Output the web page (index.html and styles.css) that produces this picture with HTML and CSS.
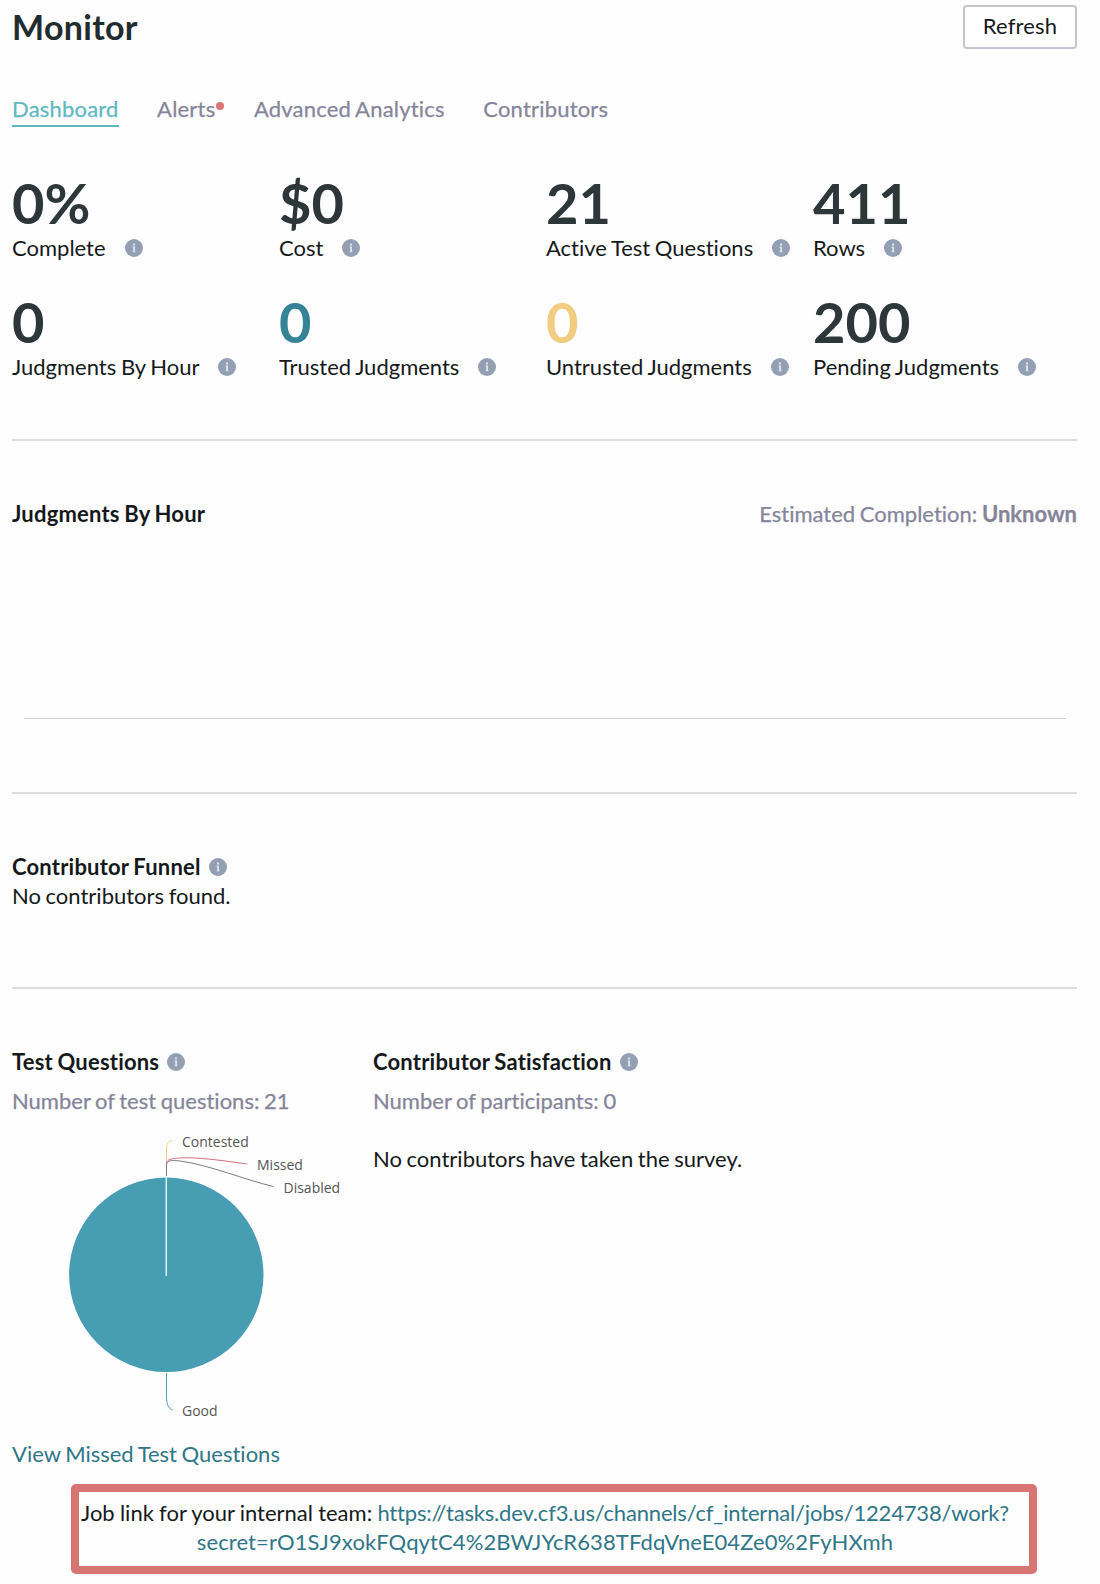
FILE: index.html
```html
<!DOCTYPE html>
<html lang="en">
<head>
    <meta charset="UTF-8">
    <meta name="viewport" content="width=device-width, initial-scale=1.0">
    <title>Monitor</title>
    <link rel="stylesheet" href="styles.css">
</head>
<body>
    <!-- Shared info icon -->
    <svg class="hidden">
        <symbol id="info" viewBox="0 0 18 18">
            <circle cx="9" cy="9" r="9" fill="#939fb3"/>
            <path d="M8 4.6h2v1.8H8zM7.5 7.6H10v4.8h.6v.9H7.5v-.9H8.2V8.500h-.7z" fill="#dfe4ec"/>
        </symbol>
    </svg>

    <header class="header">
        <h1>Monitor</h1>
        <button class="refresh">Refresh</button>
    </header>

    <nav class="tabs">
        <a href="#" class="tab active">Dashboard</a>
        <a href="#" class="tab alerts">Alerts<span class="dot"></span></a>
        <a href="#" class="tab">Advanced Analytics</a>
        <a href="#" class="tab">Contributors</a>
    </nav>

    <div class="stats">
        <div class="stat">
            <div class="value">0%</div>
            <div class="label">Complete <svg class="info"><use href="#info"/></svg></div>
        </div>
        <div class="stat">
            <div class="value">$0</div>
            <div class="label">Cost <svg class="info"><use href="#info"/></svg></div>
        </div>
        <div class="stat">
            <div class="value">21</div>
            <div class="label">Active Test Questions <svg class="info"><use href="#info"/></svg></div>
        </div>
        <div class="stat">
            <div class="value">411</div>
            <div class="label">Rows <svg class="info"><use href="#info"/></svg></div>
        </div>
        <div class="stat">
            <div class="value">0</div>
            <div class="label">Judgments By Hour <svg class="info"><use href="#info"/></svg></div>
        </div>
        <div class="stat">
            <div class="value trusted">0</div>
            <div class="label">Trusted Judgments <svg class="info"><use href="#info"/></svg></div>
        </div>
        <div class="stat">
            <div class="value untrusted">0</div>
            <div class="label">Untrusted Judgments <svg class="info"><use href="#info"/></svg></div>
        </div>
        <div class="stat">
            <div class="value">200</div>
            <div class="label">Pending Judgments <svg class="info"><use href="#info"/></svg></div>
        </div>
    </div>

    <section class="section hourly">
        <div class="section-head">
            <h2>Judgments By Hour</h2>
            <p class="muted">Estimated Completion: <b>Unknown</b></p>
        </div>
        <div class="hour-chart"></div>
    </section>

    <section class="section funnel">
        <h2>Contributor Funnel <svg class="info"><use href="#info"/></svg></h2>
        <p>No contributors found.</p>
    </section>

    <section class="section columns">
        <div class="questions">
            <h2>Test Questions <svg class="info"><use href="#info"/></svg></h2>
            <p class="muted count">Number of test questions: 21</p>
            <svg class="pie" width="350" height="324" viewBox="12 1115 350 324">
                <circle cx="166.3" cy="1274.8" r="97.2" fill="#479db1"/>
                <path d="M166.3 1177V1276" stroke="#d9fbff" stroke-width="1.5"/>
                <g fill="none" stroke-width="1">
                    <path d="M172 1140.5C168 1141 166.5 1144 166.5 1150V1164" stroke="#f0cd80"/>
                    <path d="M166.5 1176V1163C167 1158 178 1157.5 195 1158C212 1159 230 1161.5 247 1164" stroke="#d0717b"/>
                    <path d="M166.5 1176V1165C167 1160 172 1160 180 1161C210 1165 245 1180 273.5 1186.5" stroke="#7d7b86"/>
                    <path d="M166.5 1373V1396C166.5 1404 168 1408 172.5 1410" stroke="#479db1"/>
                </g>
                <g class="pie-labels">
                    <text x="182" y="1146.5">Contested</text>
                    <text x="257" y="1169.5">Missed</text>
                    <text x="283.5" y="1193">Disabled</text>
                    <text x="182" y="1416">Good</text>
                </g>
            </svg>
            <a href="#" class="link">View Missed Test Questions</a>
        </div>
        <div class="satisfaction">
            <h2>Contributor Satisfaction <svg class="info"><use href="#info"/></svg></h2>
            <p class="muted count">Number of participants: 0</p>
            <p class="survey">No contributors have taken the survey.</p>
        </div>
    </section>

    <div class="job-link">
        Job link for your internal team: <a href="#" class="link"><span class="url-path">https://tasks.dev.cf3.us/channels/cf_internal/jobs/1224738/work?</span><br><span class="url-query">secret=rO1SJ9xokFQqytC4%2BWJYcR638TFdqVneE04Ze0%2FyHXmh</span></a>
    </div>
</body>
</html>
```

FILE: styles.css
```css
* {
    box-sizing: border-box;
}
body {
    margin: 0;
    padding: 5px 23px 0 12px;
    background-color: #fefefe;
    color: #15191b;
    font-family: Lato, sans-serif;
    font-size: 22px;
    line-height: 29px;
    font-variant-ligatures: none;
    word-spacing: -1px;
}
h1, h2, p {
    margin: 0;
}
h1 {
    padding-bottom: 2px;
    font-size: 34px;
    letter-spacing: 0.3px;
    color: #222b2e;
}
h2 {
    font-size: 22px;
    font-weight: bold;
    letter-spacing: 0.2px;
}
a {
    text-decoration: none;
}
.hidden {
    display: none;
}
.header {
    display: flex;
    justify-content: space-between;
    align-items: center;
    height: 44px;
}
.refresh {
    width: 114px;
    height: 44px;
    padding: 0 0 3px;
    background-color: #fff;
    border: 2px solid #c5c5cf;
    border-radius: 4px;
    font: inherit;
    letter-spacing: 0.2px;
    color: #15191b;
}
.tabs {
    display: flex;
    margin-top: 45px;
}
.tab {
    margin-right: 38.5px;
    padding-bottom: 2px;
    border-bottom: 2px solid transparent;
    letter-spacing: 0.2px;
    color: #85859a;
    -webkit-text-stroke: 0.25px;
}
.tab.active {
    color: #5fb8c2;
    border-color: #5fb8c2;
}
.tab.alerts {
    margin-right: 29.5px;
}
.dot {
    display: inline-block;
    width: 8px;
    height: 8px;
    margin-left: 1px;
    border-radius: 50%;
    background-color: #dc747a;
    vertical-align: 7px;
}
.stats {
    display: grid;
    grid-template-columns: repeat(4, 267px);
    row-gap: 29px;
    margin: 45px -3px 58px 0;
}
.value {
    height: 61px;
    line-height: 61px;
    font-size: 56px;
    font-weight: bold;
    color: #2d3639;
}
.trusted {
    color: #358396;
}
.untrusted {
    color: #f0cd80;
}
.label, h2 {
    display: flex;
    align-items: center;
    gap: 19px;
}
h2 {
    gap: 8px;
}
.info {
    width: 18px;
    height: 18px;
}
.section {
    border-top: 2px solid #dddde1;
    padding-top: 58px;
}
.section-head {
    display: flex;
    justify-content: space-between;
}
.muted {
    color: #85859a;
    -webkit-text-stroke: 0.25px;
}
.hourly {
    height: 353px;
}
.hour-chart {
    height: 191px;
    margin: 0 11px 0 12px;
    border-bottom: 1px solid #cfcfd3;
}
.funnel {
    height: 195px;
}
.columns {
    display: grid;
    grid-template-columns: 361px 1fr;
}
.count {
    margin-top: 10px;
}
.survey {
    margin-top: 29px;
}
.pie {
    display: block;
}
.pie-labels {
    font-family: "Open Sans", sans-serif;
    font-size: 14px;
    fill: #555;
}
.link {
    color: #2f7688;
}
.job-link {
    width: 966px;
    height: 90px;
    margin: 16px 0 0 59px;
    padding: 6px 18px 0 0;
    border: 8px solid #d67571;
    border-radius: 5px;
    text-align: center;
    white-space: nowrap;
    word-spacing: -0.4px;
}
.url-path {
    letter-spacing: -0.18px;
}
.url-query {
    letter-spacing: 0.1px;
}
```
